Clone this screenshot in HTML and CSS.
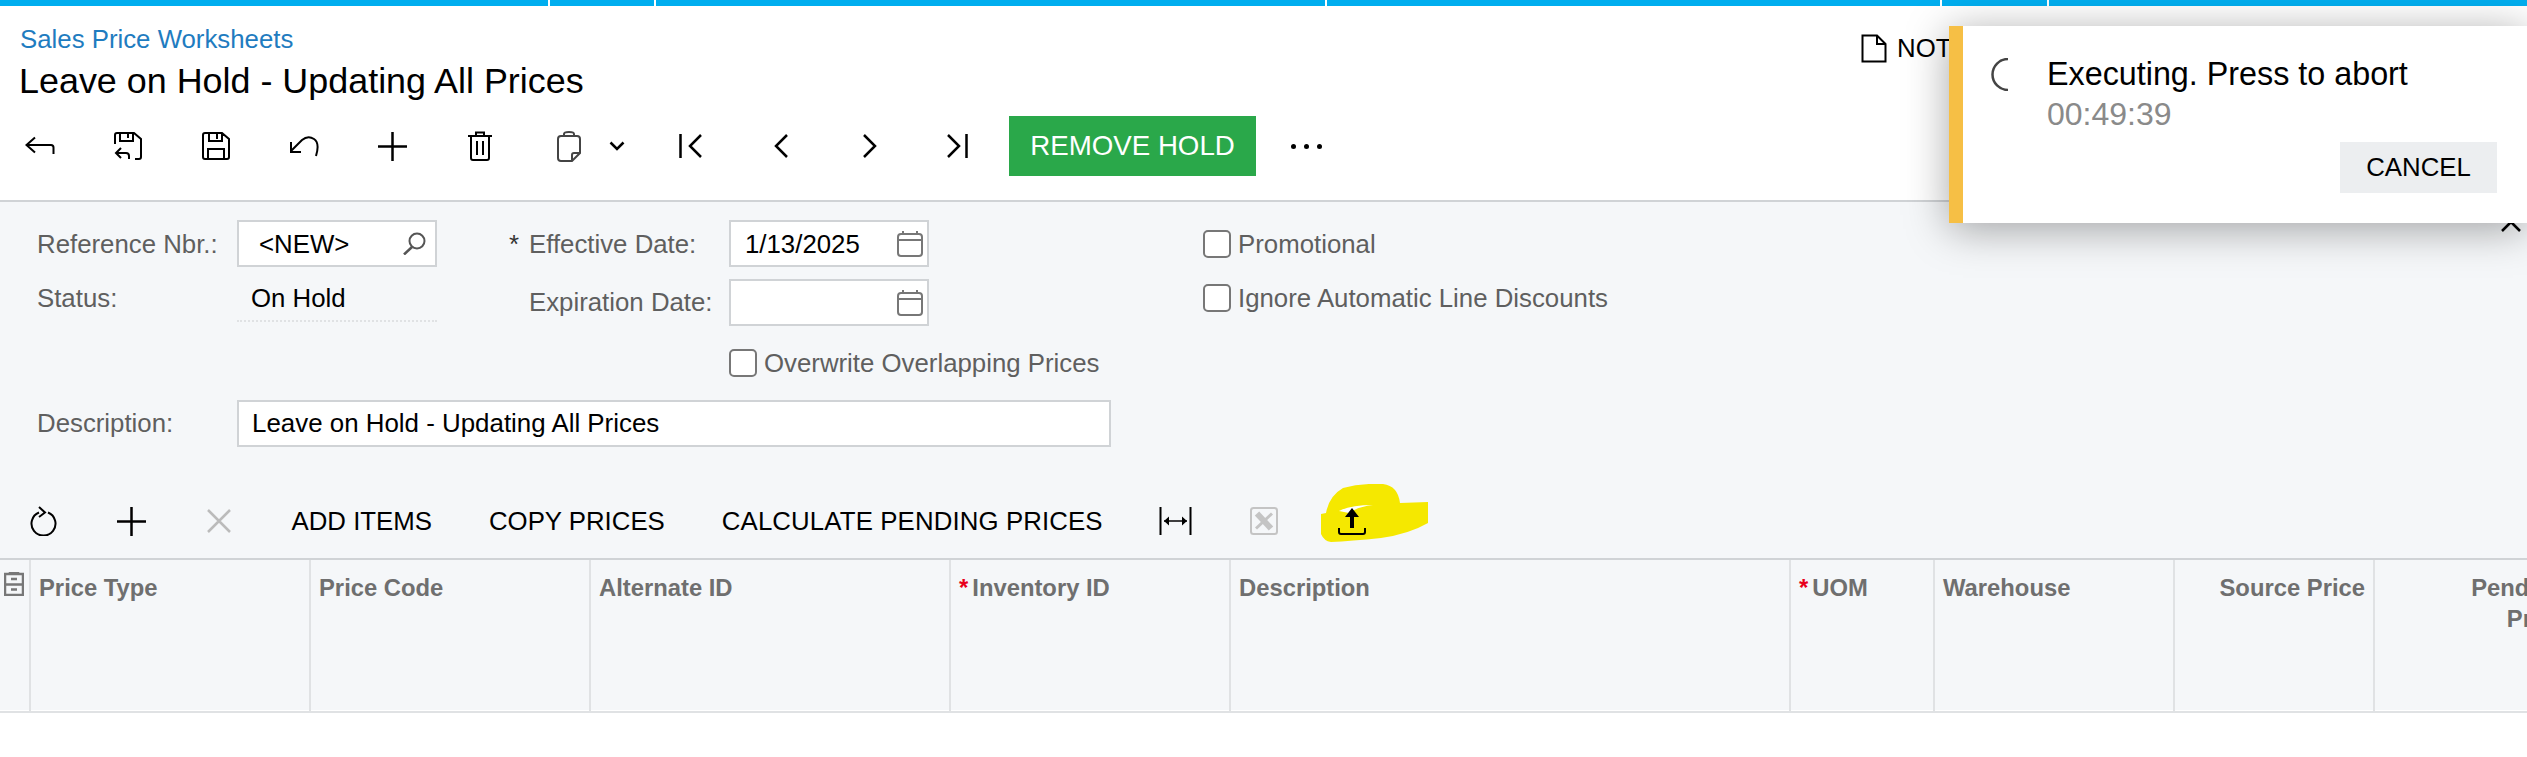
FILE: index.html
```html
<!DOCTYPE html>
<html lang="en">
<head>
    <meta charset="UTF-8">
    <title>Sales Price Worksheets</title>
    <link rel="stylesheet" href="styles.css">
</head>
<body>

    <!-- Top Bar -->
    <div class="topbar">
        <span class="seg seg-a"></span>
        <span class="seg seg-b"></span>
        <span class="seg seg-c"></span>
        <span class="seg seg-d"></span>
        <span class="seg seg-e"></span>
        <span class="seg seg-f"></span>
    </div>

    <!-- Header -->
    <header class="head">
        <div class="head-top">
            <div class="titles">
                <a class="crumb" href="#">Sales Price Worksheets</a>
                <h1 class="title">Leave on Hold - Updating All Prices</h1>
            </div>
            <div class="notes">
                <svg width="26" height="29" viewBox="0 0 26 29"><path d="M1.5 1.5H16L24.500 10V27.500H1.500Z M16 1.500V10H24.500" fill="none" stroke="#000" stroke-width="2"/></svg>
                <span>NOTES</span>
            </div>
        </div>
        <div class="toolbar">
            <button class="tb-btn"><svg width="30" height="20" viewBox="0 0 30 20"><path d="M10 1.500L1.500 9L10 16.500M1.500 9H26Q28.500 9 28.500 11.500V18" fill="none" stroke="#000" stroke-width="2"/></svg></button>
            <button class="tb-btn"><svg width="28" height="28" viewBox="0 0 28 28"><path d="M1 12V3Q1 1 3 1H20L27 7V25Q27 27 25 27H21M6 1V9H19V1M14 1.500V6" fill="none" stroke="#000" stroke-width="2"/><path d="M7 16L2 21L7 26M2 21H12Q15 21 15 24V27" fill="none" stroke="#000" stroke-width="2"/></svg></button>
            <button class="tb-btn"><svg width="28" height="28" viewBox="0 0 28 28"><path d="M3 1H20L27 7V25Q27 27 25 27H3Q1 27 1 25V3Q1 1 3 1ZM7 1V9H20V1M15 2V7M6 27V17H22V27" fill="none" stroke="#000" stroke-width="2"/></svg></button>
            <button class="tb-btn"><svg width="30" height="22" viewBox="0 0 30 22"><path d="M2 7V17H12M2 16L13 5Q19 0 25 4T27 21" fill="none" stroke="#000" stroke-width="2"/></svg></button>
            <button class="tb-btn"><svg width="29" height="29" viewBox="0 0 29 29"><path d="M14.500 0V29M0 14.500H29" stroke="#000" stroke-width="2.500"/></svg></button>
            <button class="tb-btn"><svg width="24" height="30" viewBox="0 0 24 30"><path d="M0 5H24M8 5V1.500H16V5M3 5V27Q3 29 5 29H19Q21 29 21 27V5M9 10V24M15 10V24" fill="none" stroke="#000" stroke-width="2"/></svg></button>
            <button class="tb-btn tb-split">
                <svg width="24" height="31" viewBox="0 0 24 31"><path d="M7 5V3Q7 1 12 1T17 3V5M4 5H20Q23 5 23 8V22L15 30H4Q1 30 1 27V8Q1 5 4 5ZM23 22H17Q15 22 15 24V30" fill="none" stroke="#444" stroke-width="2"/></svg>
                <svg width="16" height="10" viewBox="0 0 16 10"><path d="M1.500 1.500L8 8L14.500 1.500" fill="none" stroke="#000" stroke-width="2.500"/></svg>
            </button>
            <button class="tb-btn tb-nav"><svg width="23" height="24" viewBox="0 0 23 24"><path d="M1.500 0V24M22 1L11 12L22 23" fill="none" stroke="#000" stroke-width="2.500"/></svg></button>
            <button class="tb-btn tb-nav"><svg width="15" height="24" viewBox="0 0 15 24"><path d="M14 1L3 12L14 23" fill="none" stroke="#000" stroke-width="2.500"/></svg></button>
            <button class="tb-btn tb-nav"><svg width="15" height="24" viewBox="0 0 15 24"><path d="M1 1L12 12L1 23" fill="none" stroke="#000" stroke-width="2.500"/></svg></button>
            <button class="tb-btn tb-last"><svg width="21" height="24" viewBox="0 0 21 24"><path d="M19.500 0V24M1 1L12 12L1 23" fill="none" stroke="#000" stroke-width="2.500"/></svg></button>
            <button class="cta-btn">REMOVE HOLD</button>
            <button class="tb-more"><i></i><i></i><i></i></button>
        </div>
    </header>

    <!-- Form -->
    <section class="form">
        <svg class="hidden-x" width="20" height="20" viewBox="0 0 20 20"><path d="M1 1L19 19M19 1L1 19" stroke="#000" stroke-width="2.500"/></svg>
        <div class="form-cols">
            <div class="col col-one">
                <div class="field field-first">
                    <label class="lbl">Reference Nbr.:</label>
                    <div class="input input-ref">
                        <span>&lt;NEW&gt;</span>
                        <svg width="23" height="23" viewBox="0 0 23 23"><circle cx="14" cy="9" r="7.500" fill="none" stroke="#555" stroke-width="2"/><path d="M9 15L1 22.500" stroke="#555" stroke-width="2.500"/></svg>
                    </div>
                </div>
                <div class="field field-status">
                    <label class="lbl">Status:</label>
                    <div class="status-val">On Hold</div>
                </div>
            </div>
            <div class="col col-two">
                <div class="field field-first">
                    <label class="lbl lbl-wide"><em>*</em>Effective Date:</label>
                    <div class="input input-date">
                        <span>1/13/2025</span>
                        <svg width="26" height="26" viewBox="0 0 26 26"><path d="M4 3H22Q25 3 25 6V22Q25 25 22 25H4Q1 25 1 22V6Q1 3 4 3ZM1 9H25M6 0V3M20 0V3" fill="none" stroke="#777" stroke-width="2"/></svg>
                    </div>
                </div>
                <div class="field">
                    <label class="lbl lbl-wide lbl-indent">Expiration Date:</label>
                    <div class="input input-date">
                        <span></span>
                        <svg width="26" height="26" viewBox="0 0 26 26"><path d="M4 3H22Q25 3 25 6V22Q25 25 22 25H4Q1 25 1 22V6Q1 3 4 3ZM1 9H25M6 0V3M20 0V3" fill="none" stroke="#777" stroke-width="2"/></svg>
                    </div>
                </div>
                <label class="check check-overwrite"><i class="box"></i>Overwrite Overlapping Prices</label>
            </div>
            <div class="col col-three">
                <label class="check"><i class="box"></i>Promotional</label>
                <label class="check"><i class="box"></i>Ignore Automatic Line Discounts</label>
            </div>
        </div>
        <div class="field field-desc">
            <label class="lbl">Description:</label>
            <div class="input input-desc"><span>Leave on Hold - Updating All Prices</span></div>
        </div>

        <!-- Grid Toolbar -->
        <div class="grid-toolbar">
            <button class="gt-btn gt-first"><svg width="27" height="30" viewBox="0 0 27 30"><path d="M9 6.500A12 12 0 1 0 18 6.500" fill="none" stroke="#000" stroke-width="2"/><path d="M9 1L15 6.500L9 11" fill="none" stroke="#000" stroke-width="2"/></svg></button>
            <button class="gt-btn"><svg width="29" height="29" viewBox="0 0 29 29"><path d="M14.500 0V29M0 14.500H29" stroke="#000" stroke-width="2.500"/></svg></button>
            <button class="gt-btn"><svg width="24" height="24" viewBox="0 0 24 24"><path d="M1 1L23 23M23 1L1 23" stroke="#bbb" stroke-width="2.500"/></svg></button>
            <button class="gt-text">ADD ITEMS</button>
            <button class="gt-text">COPY PRICES</button>
            <button class="gt-text gt-calc">CALCULATE PENDING PRICES</button>
            <button class="gt-btn gt-fit"><svg width="33" height="28" viewBox="0 0 33 28"><path d="M1.500 0V28M31.500 0V28" stroke="#000" stroke-width="2"/><path d="M5 14H28" stroke="#000" stroke-width="1.500"/><path d="M10 9.500L5 14L10 18.500ZM23 9.500L28 14L23 18.500Z" fill="#000"/></svg></button>
            <button class="gt-btn"><svg width="28" height="28" viewBox="0 0 28 28"><rect x="1" y="1" width="26" height="26" rx="2.500" fill="none" stroke="#c4c4c4" stroke-width="2"/><path d="M7 6.500L21 21.500" stroke="#c4c4c4" stroke-width="6"/><path d="M22 6.500L6 21.500" stroke="#c4c4c4" stroke-width="3"/></svg></button>
            <button class="gt-btn gt-upload">
                <svg class="blob" width="107" height="58" viewBox="0 0 107 58"><path d="M5 29Q8 12 22 4Q40 -1 62 0Q77 2 79 19L107 18V39Q88 50 60 54Q30 57 10 58Q3 57 0 50V30Z" fill="#f5e800"/><path d="M18 27Q30 21 52 21Q36 23 28 29Z" fill="#fff"/></svg>
                <svg class="upload-icon" width="28" height="27" viewBox="0 0 28 27"><path d="M14 0L21 9H16V20H12V9H7Z" fill="#000"/><path d="M1 20V24Q1 26 3 26H25Q27 26 27 24V20" fill="none" stroke="#000" stroke-width="2"/></svg>
            </button>
        </div>

        <!-- Grid -->
        <div class="grid">
            <div class="gc gc-icon"><svg width="20" height="24" viewBox="0 0 20 24"><path d="M6 2H14V0H6ZM1 2H19V23H1ZM1 12.500H19M7 7H13M7 17.500H13" fill="none" stroke="#777" stroke-width="2.500"/></svg></div>
            <div class="gc">Price Type</div>
            <div class="gc">Price Code</div>
            <div class="gc">Alternate ID</div>
            <div class="gc"><em>*</em>Inventory ID</div>
            <div class="gc">Description</div>
            <div class="gc"><em>*</em>UOM</div>
            <div class="gc">Warehouse</div>
            <div class="gc gc-right">Source Price</div>
            <div class="gc gc-right">Pending<br>Price</div>
        </div>
    </section>

    <!-- Long Operation Toast -->
    <aside class="toast">
        <div class="toast-main">
            <svg class="spinner" width="20" height="33" viewBox="0 0 20 33"><path d="M19 1A15.500 15.500 0 0 0 19 32" fill="none" stroke="#444" stroke-width="2.500"/></svg>
            <div>
                <div class="toast-msg">Executing. Press to abort</div>
                <div class="toast-time">00:49:39</div>
            </div>
        </div>
        <button class="toast-cancel">CANCEL</button>
    </aside>

</body>
</html>
```

FILE: styles.css
```css
/* Reset styles */
* {
    margin: 0;
    padding: 0;
    box-sizing: border-box;
    font-family: 'Liberation Sans', Arial, sans-serif;
}

body {
    background: white;
    color: black;
    overflow: hidden;
    height: 757px;
    font-size: 25.8px;
    position: relative;
}

button {
    background: none;
    border: none;
    color: inherit;
    font-size: inherit;
}

svg {
    display: block;
    flex: none;
}

/* Top Bar */
.topbar {
    display: flex;
    height: 6px;
    gap: 2px;
}

.seg {
    background: #00aeef;
}

.seg-a { width: 548px; }
.seg-b { width: 104px; }
.seg-c { width: 669px; }
.seg-d { width: 613px; }
.seg-e { width: 105px; }
.seg-f { flex: 1; }

/* Header */
.head {
    height: 196px;
    border-bottom: 2px solid #d0d3d6;
}

.head-top {
    display: flex;
    padding-left: 20px;
    height: 98px;
    padding-top: 17px;
}

.titles {
    width: 1841px;
}

.crumb {
    display: block;
    color: #1f7cc0;
    text-decoration: none;
    line-height: 32px;
}

.title {
    font-size: 35.900px;
    font-weight: normal;
    line-height: 46px;
    margin-top: 3px;
    margin-left: -1px;
}

.notes {
    display: flex;
    align-items: center;
    gap: 10px;
    height: 29px;
    margin-top: 11px;
}

.toolbar {
    display: flex;
    align-items: center;
    height: 60px;
    margin-top: 12px;
    margin-left: -4px;
}

.tb-btn {
    width: 88px;
    height: 60px;
    display: flex;
    align-items: center;
    justify-content: center;
}

.tb-split {
    width: 121px;
    gap: 28px;
    justify-content: flex-start;
    padding-left: 33px;
}

.tb-nav {
    width: 90px;
}

.tb-last {
    width: 85px;
}

.cta-btn {
    width: 247px;
    height: 60px;
    margin-left: 9px;
    background: #2aa84a;
    color: white;
    font-size: 27.700px;
}

.tb-more {
    display: flex;
    gap: 8px;
    margin-left: 35px;
}

.tb-more i {
    width: 5px;
    height: 5px;
    border-radius: 50%;
    background: black;
}

/* Form */
.form {
    position: relative;
    height: 508px;
    padding-top: 18px;
    background: #f5f7f9;
}

.hidden-x {
    position: absolute;
    top: 10px;
    right: 6px;
}

.form-cols {
    display: flex;
    padding-left: 37px;
    height: 155px;
}

.col {
    display: flex;
    flex-direction: column;
}

.col-one {
    width: 400px;
    gap: 12px;
}

.col-two {
    width: 694px;
    margin-left: 72px;
    gap: 12px;
}

.col-three {
    gap: 26px;
    padding-top: 10px;
}

.field {
    display: flex;
    align-items: center;
    height: 47px;
}

.lbl {
    width: 200px;
    color: #5f5f5f;
    flex: none;
}

.field-first .lbl,
.field-first .input span {
    padding-top: 2px;
}

.lbl em {
    font-style: normal;
    color: #333;
    display: inline-block;
    width: 20px;
}

.lbl-wide {
    width: 220px;
}

.lbl-indent {
    padding-left: 20px;
}

.input {
    display: flex;
    align-items: center;
    justify-content: space-between;
    height: 47px;
    border: 2px solid #d0d3d6;
    background: white;
    padding-left: 13px;
}

.input-ref {
    width: 200px;
    padding-left: 20px;
    padding-right: 9px;
}

.input-date {
    width: 200px;
    padding-left: 14px;
    padding-right: 4px;
}

.input-desc {
    width: 874px;
    font-size: 25.900px;
}

.field-status {
    align-items: flex-start;
    height: 43px;
}

.field-status .lbl {
    line-height: 38px;
}

.status-val {
    width: 200px;
    height: 43px;
    line-height: 38px;
    padding-left: 14px;
    border-bottom: 2px dotted #e0e2e4;
}

.check {
    display: flex;
    align-items: center;
    gap: 7px;
    height: 28px;
    color: #5f5f5f;
    white-space: nowrap;
}

.check-overwrite {
    margin-left: 220px;
    margin-top: 11px;
}

.box {
    width: 28px;
    height: 28px;
    border: 2px solid #777;
    border-radius: 5px;
    background: white;
}

.field-desc {
    padding-left: 37px;
    margin-top: 25px;
}

/* Grid Toolbar */
.grid-toolbar {
    display: flex;
    height: 60px;
    margin-top: 44px;
    margin-bottom: 7px;
}

.gt-btn {
    width: 88px;
    height: 60px;
    display: flex;
    align-items: center;
    justify-content: center;
}

.gt-first {
    width: 87px;
}

.gt-text {
    padding: 0 28.500px;
    height: 60px;
    white-space: nowrap;
}

.gt-calc {
    letter-spacing: 0.12px;
    padding-right: 29px;
}

.gt-upload {
    position: relative;
}

.blob {
    position: absolute;
    left: 13px;
    top: -7px;
}

.upload-icon {
    position: relative;
}

/* Grid */
.grid {
    display: grid;
    grid-template-columns: 31px 280px 280px 360px 280px 560px 144px 240px 200px 200px;
    height: 155px;
    border-top: 2px solid #d0d3d6;
    border-bottom: 2px solid #e0e2e4;
    overflow: hidden;
}

.gc {
    padding: 12px 8px 0 8px;
    border-right: 2px solid #e0e2e4;
    color: #6f6f6f;
    font-size: 23.800px;
    font-weight: bold;
    line-height: 31px;
    white-space: nowrap;
}

.gc em {
    font-style: normal;
    color: #e8001c;
    margin-right: 4px;
}

.gc-icon {
    padding: 12px 0 0 4px;
}

.gc-right {
    text-align: right;
}

/* Long Operation Toast */
.toast {
    position: absolute;
    top: 26px;
    right: 0;
    width: 578px;
    height: 197px;
    display: flex;
    flex-direction: column;
    border-left: 14px solid #f6bf45;
    background: white;
    box-shadow: 0 6px 40px rgba(0, 0, 0, 0.35);
}

.toast-main {
    display: flex;
    gap: 38px;
    padding: 28px 0 0 26px;
}

.toast-msg {
    font-size: 32.300px;
    line-height: 40px;
}

.toast-time {
    font-size: 32px;
    line-height: 40px;
    color: #8a8a8a;
}

.toast-cancel {
    align-self: flex-end;
    width: 157px;
    height: 51px;
    margin: 8px 30px 0 0;
    background: #eceef0;
}

.spinner {
    margin-top: 4px;
}
```
